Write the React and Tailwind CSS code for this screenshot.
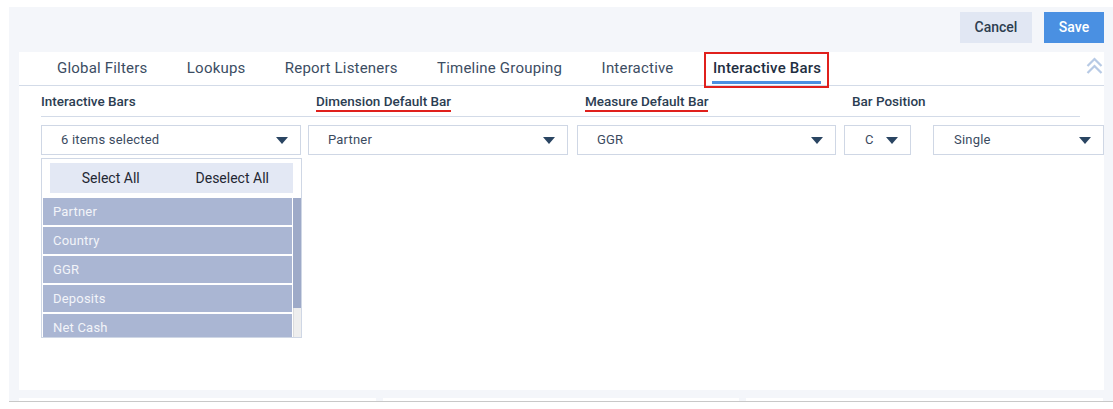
import { useState } from 'react';

const tabs = ['Global Filters', 'Lookups', 'Report Listeners', 'Timeline Grouping', 'Interactive', 'Interactive Bars'];
const barItems = ['Partner', 'Country', 'GGR', 'Deposits', 'Net Cash'];

function Caret() {
  return (
    <svg width="12" height="7" viewBox="0 0 12 7" className="shrink-0">
      <path d="M0 0 H12 L6 7 Z" fill="#2a4562" />
    </svg>
  );
}

function Dropdown({ value, className, textPad = 'pl-[19px]' }) {
  return (
    <div
      className={`flex h-[30px] items-center justify-between border border-[#cfd7e5] bg-white pr-[12px] ${textPad} ${className}`}
    >
      <span className="text-[13px] tracking-[0.2px] text-[#3b4b5f]">{value}</span>
      <Caret />
    </div>
  );
}

export default function App() {
  const [active, setActive] = useState('Interactive Bars');

  return (
    <div className="h-[409px] w-[1113px] overflow-hidden bg-white font-['Roboto',sans-serif]">
      <div className="ml-[9px] mt-[7px] flex h-[395px] flex-col border-b border-[#c8c8c8] bg-[#f4f6fa]">
        {/* action buttons */}
        <div className="flex justify-end gap-[12px] pr-[9px] pt-[5px]">
          <button type="button" className="h-[31px] w-[72px] bg-[#e1e7f3] text-[14px] font-medium text-[#2d3e50]">
            Cancel
          </button>
          <button type="button" className="h-[31px] w-[60px] bg-[#4a90e2] text-[14px] font-medium text-white">
            Save
          </button>
        </div>

        <div className="ml-[10px] mr-[9px] mt-[9px] h-[338px] bg-white">
          {/* tabs */}
          <div className="flex h-[34px] items-center border-b border-[#d3dbe8] pl-[38px]">
            <div className="flex h-full gap-[39.4px]">
              {tabs.map((t) => {
                const isActive = t === active;
                return (
                  <button
                    key={t}
                    type="button"
                    onClick={() => setActive(t)}
                    className={`relative flex h-full items-center text-[15px] tracking-[0.2px] ${
                      isActive ? 'font-medium text-[#1f2f42]' : 'text-[#3c4d63]'
                    }`}
                  >
                    {t}
                    {isActive && (
                      <>
                        <span className="absolute bottom-[1px] left-[-1px] right-0 h-[3px] bg-[#4a90e2]" />
                        <span className="absolute bottom-[-3px] left-[-9px] right-[-8px] top-0 border-2 border-[#e0201c]" />
                      </>
                    )}
                  </button>
                );
              })}
            </div>
            <svg width="17" height="18" viewBox="0 0 17 18" className="ml-auto mr-[1px] mt-[5px] self-start">
              <path d="M1.5 9 L8.5 2 L15.5 9" fill="none" stroke="#b7cae5" strokeWidth="2.2" />
              <path d="M1.5 16 L8.5 9 L15.5 16" fill="none" stroke="#b7cae5" strokeWidth="2.2" />
            </svg>
          </div>

          <div className="pl-[22px]">
            {/* headers */}
            <div className="flex h-[31px] w-[1039px] items-center border-b border-[#d3dbe8] text-[13.5px] font-medium text-[#2b3d52]">
              <div className="w-[267px]">Interactive Bars</div>
              <div className="w-[269px] pl-[8px]">
                <span className="border-b-2 border-[#e0201c] pb-[1px]">Dimension Default Bar</span>
              </div>
              <div className="w-[267px] pl-[8px]">
                <span className="border-b-2 border-[#e0201c] pb-[1px]">Measure Default Bar</span>
              </div>
              <div className="pl-[8px]">Bar Position</div>
            </div>

            {/* selects */}
            <div className="mt-[8px] flex">
              <div className="w-[260px]">
                <Dropdown value="6 items selected" className="w-[260px]" />
                <div className="mt-[3px] flex h-[180px] w-[261px] flex-col border border-[#cfd7e5] bg-white">
                  <div className="mx-[8px] mt-[4px] flex h-[30px] bg-[#e3e8f4] text-[14px] text-[#1f2733]">
                    <button type="button" className="flex-1">Select All</button>
                    <button type="button" className="flex-1">Deselect All</button>
                  </div>
                  <div className="mt-[5px] flex min-h-0 flex-1 pl-[1px]">
                    <div className="flex-1 overflow-hidden">
                      {barItems.map((b) => (
                        <div
                          key={b}
                          className="mb-[2px] flex h-[27px] items-center bg-[#aab6d3] pl-[10px] text-[13px] tracking-[0.2px] text-[#f2f4f9]"
                        >
                          {b}
                        </div>
                      ))}
                    </div>
                    <div className="ml-[1px] flex w-[8px] flex-col">
                      <div className="h-[110px] bg-[#9eaac8]" />
                      <div className="flex-1 border-l border-[#dcdcdc] bg-[#eeeeee]" />
                    </div>
                  </div>
                </div>
              </div>
              <Dropdown value="Partner" className="ml-[7px] w-[260px]" />
              <Dropdown value="GGR" className="ml-[9px] w-[259px]" />
              <Dropdown value="C" className="ml-[8px] w-[67px]" textPad="pl-[20px]" />
              <Dropdown value="Single" className="ml-[22px] w-[171px]" textPad="pl-[20px]" />
            </div>
          </div>
        </div>

        <div className="mt-[8px] flex gap-[7px] px-[10px]">
          <div className="h-[3px] flex-1 bg-white" />
          <div className="h-[3px] flex-1 bg-white" />
          <div className="h-[3px] flex-1 bg-white" />
        </div>
      </div>
    </div>
  );
}
